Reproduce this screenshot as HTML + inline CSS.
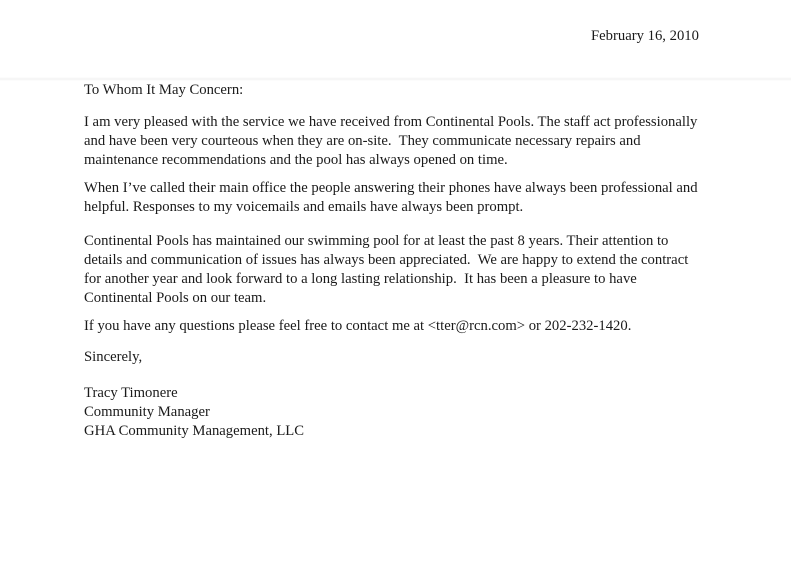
<!DOCTYPE html>
<html><head><meta charset="utf-8"><style>
html,body{margin:0;padding:0}
body{width:791px;height:563px;background:#fff;position:relative;overflow:hidden;font-family:"Liberation Serif",serif;font-size:15px;color:#1a1a1a}
.l{position:absolute;left:84px;white-space:pre;line-height:19px;height:19px;transform-origin:0 50%;transform:scaleX(0.978)}
.band{position:absolute;left:0;top:77px;width:791px;height:4px;background:linear-gradient(#fff,#f3f3f3,#fff)}
</style></head><body>
<div class="band"></div>
<div class="l" style="left:591px;top:27px">February 16, 2010</div>
<div class="l" style="top:81px">To Whom It May Concern:</div>
<div class="l" style="top:113px">I am very pleased with the service we have received from Continental Pools. The staff act professionally</div>
<div class="l" style="top:132px">and have been very courteous when they are on-site.  They communicate necessary repairs and</div>
<div class="l" style="top:151px">maintenance recommendations and the pool has always opened on time.</div>
<div class="l" style="top:179px">When I’ve called their main office the people answering their phones have always been professional and</div>
<div class="l" style="top:198px">helpful. Responses to my voicemails and emails have always been prompt.</div>
<div class="l" style="top:232px">Continental Pools has maintained our swimming pool for at least the past 8 years. Their attention to</div>
<div class="l" style="top:251px">details and communication of issues has always been appreciated.  We are happy to extend the contract</div>
<div class="l" style="top:270px">for another year and look forward to a long lasting relationship.  It has been a pleasure to have</div>
<div class="l" style="top:289px">Continental Pools on our team.</div>
<div class="l" style="top:317px">If you have any questions please feel free to contact me at &lt;tter@rcn.com&gt; or 202-232-1420.</div>
<div class="l" style="top:348px">Sincerely,</div>
<div class="l" style="top:384px">Tracy Timonere</div>
<div class="l" style="top:403px">Community Manager</div>
<div class="l" style="top:422px">GHA Community Management, LLC</div>
</body></html>
